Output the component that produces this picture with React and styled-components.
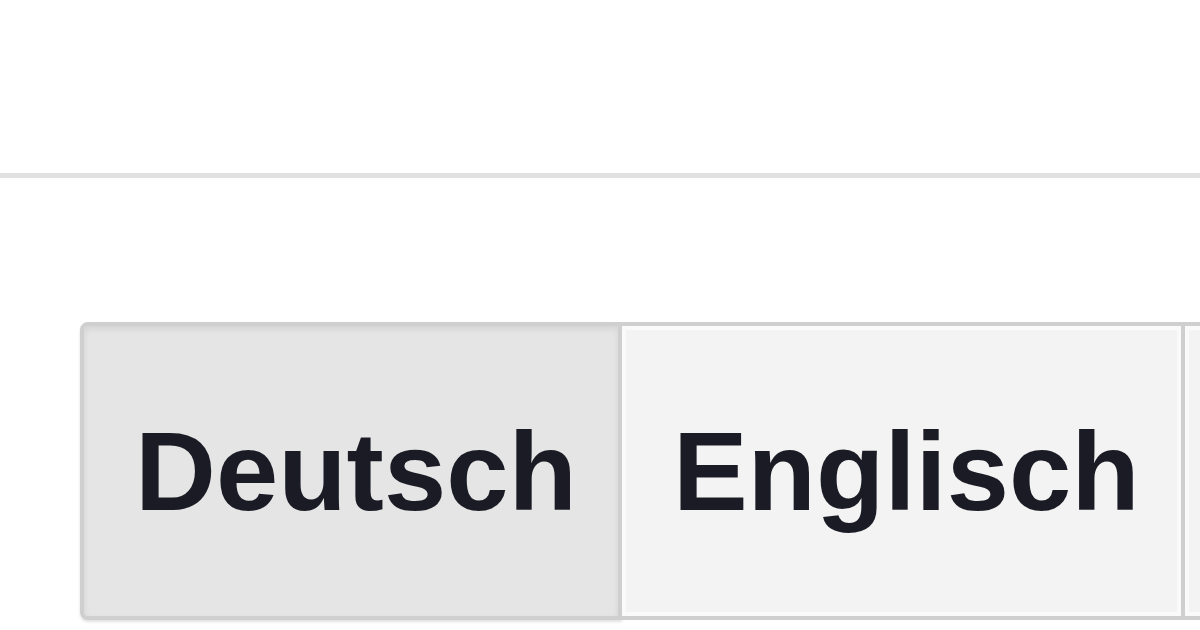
import React from 'react';
import styled, {createGlobalStyle} from 'styled-components';

const GlobalStyle = createGlobalStyle`
	html, body {
		margin: 0;
		padding: 0;
		background: #FFFFFF;
		overflow: hidden;
	}
	body {
		font-family: "Liberation Sans", Arial, sans-serif;
	}
`;

const languages = ['Deutsch', 'Englisch'];

const App = () => {
	const [active, setActive] = React.useState('Deutsch');

	return (
		<>
			<GlobalStyle />
			<Page>
				<Header />
				<Toggle>
					{languages.map(lang => (
						<LangButton
							key={lang}
							$active={lang === active}
							onClick={() => setActive(lang)}
						>
							{lang}
						</LangButton>
					))}
					{/* next segment of the toggle, running past the edge */}
					<MoreSegment aria-label='Weitere Sprachen' />
				</Toggle>
			</Page>
		</>
	);
};

const Page = styled.div`
	width: 1200px;
	height: 630px;
	overflow: hidden;
`;

const Header = styled.div`
	height: 173px;
	border-bottom: 5px solid #E1E1E1;
`;

const Toggle = styled.div`
	display: flex;
	margin-top: 144px;
	padding-left: 80px;
	white-space: nowrap;
`;

const LangButton = styled.button`
	flex: none;
	margin: 0 0 0 -4px;
	padding: 81px 41px 80px 51px;
	border: 4px solid #CFCFCF;
	background: ${p => (p.$active ? '#E5E5E5' : '#F3F3F3')};
	box-shadow: ${p => (p.$active
		? 'inset 0 3px 6px rgba(0, 0, 0, 0.08)'
		: 'inset 0 0 0 4px #FAFAFA')};
	font-family: "Liberation Sans", Arial, sans-serif;
	font-size: 112px;
	font-weight: 700;
	line-height: normal;
	color: #1B1B26;
	cursor: pointer;

	&:first-child {
		margin-left: 0;
		border-radius: 8px 0 0 8px;
		box-shadow: inset 0 3px 6px rgba(0, 0, 0, 0.08), 0 2px 3px rgba(0, 0, 0, 0.12);
	}
`;

const MoreSegment = styled.button`
	flex: none;
	width: 200px;
	margin-left: -4px;
	border: 4px solid #CFCFCF;
	background: #F3F3F3;
	box-shadow: inset 0 0 0 4px #FAFAFA;
`;

export default App;
